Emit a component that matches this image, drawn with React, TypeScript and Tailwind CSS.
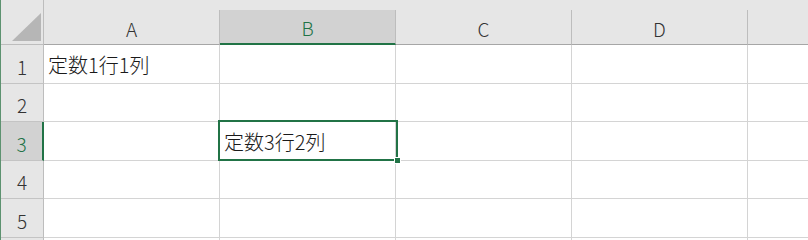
const cols = ['A', 'B', 'C', 'D'];
const rows = [
  { n: 1, h: 'h-[39px]' },
  { n: 2, h: 'h-[38px]' },
  { n: 3, h: 'h-[39px]' },
  { n: 4, h: 'h-[38px]' },
  { n: 5, h: 'h-[39px]' },
  { n: 6, h: 'h-[38px]' },
];

const cells: Record<string, string> = {
  '1-A': '定数1行1列',
  '3-B': '定数3行2列',
};

const font = { fontFamily: '"Noto Sans CJK JP", "Noto Sans", sans-serif' };

export default function App() {
  return (
    <div className="w-[808px] h-[240px] overflow-hidden bg-white flex font-light" style={font}>
      <div className="w-px h-full bg-[#5d9270]" />
      <div className="flex-1 flex flex-col relative">
        {/* column header */}
        <div className="flex h-[45px] bg-[#e6e6e6] shrink-0">
          <div className="w-[43px] h-full relative border-r border-b border-[#bdbdbd]">
            <svg className="absolute left-0 top-0" width="42" height="44" viewBox="0 0 42 44">
              <polygon points="11,41 40,41 40,13" fill="#b6b6b6" />
            </svg>
          </div>
          {cols.map((c) => {
            const sel = c === 'B';
            return (
              <div key={c} className="w-[176px] h-full pt-[10px]">
                <div
                  className={
                    sel
                      ? 'h-full flex items-center justify-center pt-[4px] bg-[#d2d2d2] border-r border-r-[#bdbdbd] border-b-2 border-b-[#217346] text-[#217346] text-[19px]'
                      : 'h-full flex items-center justify-center pt-[5px] border-r border-r-[#bdbdbd] border-b border-b-[#a6a6a6] text-[#333333] text-[19px]'
                  }
                >
                  {c}
                </div>
              </div>
            );
          })}
          <div className="flex-1 h-full pt-[10px]">
            <div className="h-full border-b border-[#a6a6a6]" />
          </div>
        </div>

        {rows.map((r) => {
          const selRow = r.n === 3;
          return (
            <div key={r.n} className={`flex shrink-0 ${r.h}`}>
              <div
                className={
                  selRow
                    ? 'w-[43px] h-full flex items-center justify-center pt-[6px] bg-[#d2d2d2] border-r-2 border-r-[#217346] border-b border-b-[#c4c4c4] text-[#217346] text-[19px]'
                    : 'w-[43px] h-full flex items-center justify-center pt-[6px] bg-[#e6e6e6] border-r border-r-[#bdbdbd] border-b border-b-[#c4c4c4] text-[#333333] text-[19px]'
                }
              >
                {r.n < 6 ? r.n : ''}
              </div>
              {cols.map((c) => (
                <div
                  key={c}
                  className="w-[176px] h-full flex items-center pl-[4px] pt-[2px] border-r border-b border-[#d4d4d4] text-[20px] text-[#1a1a1a] whitespace-nowrap"
                >
                  {cells[`${r.n}-${c}`] ?? ''}
                </div>
              ))}
              <div className="flex-1 h-full border-b border-[#d4d4d4]" />
            </div>
          );
        })}

        {/* selected cell B3 */}
        <div className="absolute left-[217px] top-[120px] w-[180px] h-[41px] border-2 border-[#217346] pointer-events-none">
          <div className="absolute -right-[5px] -bottom-[5px] w-[7px] h-[7px] bg-[#217346] border border-white" />
        </div>
      </div>
    </div>
  );
}
